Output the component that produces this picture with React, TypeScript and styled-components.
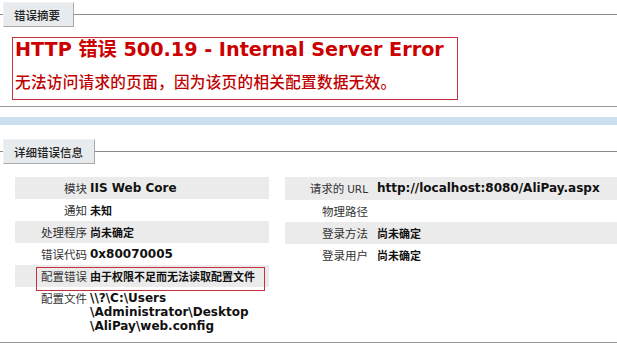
import React from "react";
import styled, { createGlobalStyle } from "styled-components";

const GlobalStyle = createGlobalStyle`
  html, body { margin: 0; padding: 0; background: #fff; }
  body {
    font-family: "DejaVu Sans", "Noto Sans CJK SC", sans-serif;
    color: #222;
    overflow: hidden;
  }
`;

const Page = styled.div`
  width: 617px;
  height: 352px;
  overflow: hidden;
  background: #fff;
`;

const Section = styled.section<{ $top: number }>`
  padding-top: ${(p) => p.$top}px;
  background: #fff;
`;

const LegendRow = styled.div`
  display: flex;
  align-items: flex-start;
  height: 25px;
`;

const Stub = styled.div<{ $w: number }>`
  width: ${(p) => p.$w}px;
  height: 1px;
  margin-top: 12px;
  background: #8c8c8c;
`;

const Tab = styled.div<{ $w: number }>`
  box-sizing: border-box;
  width: ${(p) => p.$w}px;
  height: 25px;
  padding-left: 10px;
  display: flex;
  align-items: center;
  background: #e8ebee;
  border: 1px solid;
  border-color: #f2f2f2 #a9a9a9 #a9a9a9 #f2f2f2;
  font-family: "Noto Sans CJK SC", sans-serif;
  font-weight: 500;
  font-size: 11.5px;
  color: #222;
`;

const Rule = styled.div`
  flex: 1;
  height: 1px;
  margin-top: 12px;
  background: #8c8c8c;
`;

const ErrorBox = styled.div`
  box-sizing: border-box;
  width: 446px;
  height: 63px;
  margin: 10px 0 0 12px;
  border: 1px solid #c9303f;
  padding: 0 0 0 2px;
`;

const Heading = styled.h2`
  margin: 0;
  font-family: "DejaVu Sans", "Noto Sans CJK SC", sans-serif;
  font-weight: bold;
  font-size: 19.2px;
  line-height: 24px;
  color: #cc0000;
  white-space: nowrap;
`;

const SubHeading = styled.h3`
  margin: 9px 0 0 0;
  font-family: "Noto Sans CJK SC", sans-serif;
  font-weight: 500;
  font-size: 15.6px;
  line-height: 20px;
  letter-spacing: 0.3px;
  color: #c00000;
  white-space: nowrap;
`;

const BottomRule = styled.div<{ $mt: number }>`
  height: 1px;
  margin-top: ${(p) => p.$mt}px;
  background: #999;
`;

const BlueBand = styled.div`
  height: 8px;
  margin-top: 10px;
  background: #cbe1ef;
`;

const Details = styled.div`
  display: flex;
  margin-top: 13px;
  padding-left: 15px;
`;

const Table = styled.div<{ $w?: number; $ml?: number }>`
  position: relative;
  ${(p) => (p.$w ? `width: ${p.$w}px;` : "flex: 1;")}
  margin-left: ${(p) => p.$ml ?? 0}px;
  display: flex;
  flex-direction: column;
`;

const Row = styled.div<{ $alt?: boolean; $label: number; $gap: number }>`
  display: grid;
  grid-template-columns: ${(p) => p.$label}px 1fr;
  column-gap: ${(p) => p.$gap}px;
  padding: 3px 0;
  min-height: 16px;
  background: ${(p) => (p.$alt ? "#ebebeb" : "transparent")};
`;

const Label = styled.div`
  text-align: right;
  font-family: "Noto Sans CJK SC", "DejaVu Sans", sans-serif;
  font-size: 11.5px;
  line-height: 16px;
  color: #333;
  white-space: nowrap;
`;

const LatinLabel = styled.span`
  font-family: "DejaVu Sans", sans-serif;
  font-size: 10.5px;
  margin-left: 3px;
`;

const Value = styled.div<{ $cjk?: boolean }>`
  font-family: ${(p) =>
    p.$cjk ? `"Noto Sans CJK SC", sans-serif` : `"DejaVu Sans", "Noto Sans CJK SC", sans-serif`};
  font-weight: bold;
  font-size: ${(p) => (p.$cjk ? "11px" : "12px")};
  line-height: 16px;
  color: #111;
  white-space: nowrap;
`;

const PathValue = styled.div`
  font-family: "DejaVu Sans", sans-serif;
  font-weight: bold;
  font-size: 12px;
  line-height: 14px;
  color: #111;
  padding-top: 1px;
`;

const Highlight = styled.div`
  position: absolute;
  left: 21px;
  top: 90px;
  width: 229px;
  height: 24px;
  box-sizing: border-box;
  border: 1px solid #c9303f;
  pointer-events: none;
`;

type Item = { label: string; value?: string; cjk?: boolean; latin?: string };

const leftRows: Item[] = [
  { label: "模块", value: "IIS Web Core" },
  { label: "通知", value: "未知", cjk: true },
  { label: "处理程序", value: "尚未确定", cjk: true },
  { label: "错误代码", value: "0x80070005" },
  { label: "配置错误", value: "由于权限不足而无法读取配置文件", cjk: true },
];

const rightRows: Item[] = [
  { label: "请求的", latin: "URL", value: "http://localhost:8080/AliPay.aspx" },
  { label: "物理路径" },
  { label: "登录方法", value: "尚未确定", cjk: true },
  { label: "登录用户", value: "尚未确定", cjk: true },
];

export default function App() {
  return (
    <Page>
      <GlobalStyle />
      <Section $top={2}>
        <LegendRow>
          <Stub $w={3} />
          <Tab $w={71}>错误摘要</Tab>
          <Rule />
        </LegendRow>
        <ErrorBox>
          <Heading>HTTP 错误 500.19 - Internal Server Error</Heading>
          <SubHeading>无法访问请求的页面，因为该页的相关配置数据无效。</SubHeading>
        </ErrorBox>
        <BottomRule $mt={6} />
      </Section>
      <BlueBand />
      <Section $top={14}>
        <LegendRow>
          <Stub $w={3} />
          <Tab $w={92}>详细错误信息</Tab>
          <Rule />
        </LegendRow>
        <Details>
          <Table $w={254}>
            {leftRows.map((r, i) => (
              <Row key={r.label} $alt={i % 2 === 0} $label={72} $gap={3}>
                <Label>{r.label}</Label>
                <Value $cjk={r.cjk}>{r.value}</Value>
              </Row>
            ))}
            <Row $label={72} $gap={3}>
              <Label>配置文件</Label>
              <PathValue>
                \\?\C:\Users
                <br />
                \Administrator\Desktop
                <br />
                \AliPay\web.config
              </PathValue>
            </Row>
            <Highlight />
          </Table>
          <Table $ml={16}>
            {rightRows.map((r, i) => (
              <Row key={r.label} $alt={i % 2 === 0} $label={83} $gap={9}>
                <Label>
                  {r.label}
                  {r.latin && <LatinLabel>{r.latin}</LatinLabel>}
                </Label>
                <Value $cjk={r.cjk}>{r.value ?? ""}</Value>
              </Row>
            ))}
          </Table>
        </Details>
        <BottomRule $mt={6} />
      </Section>
    </Page>
  );
}
